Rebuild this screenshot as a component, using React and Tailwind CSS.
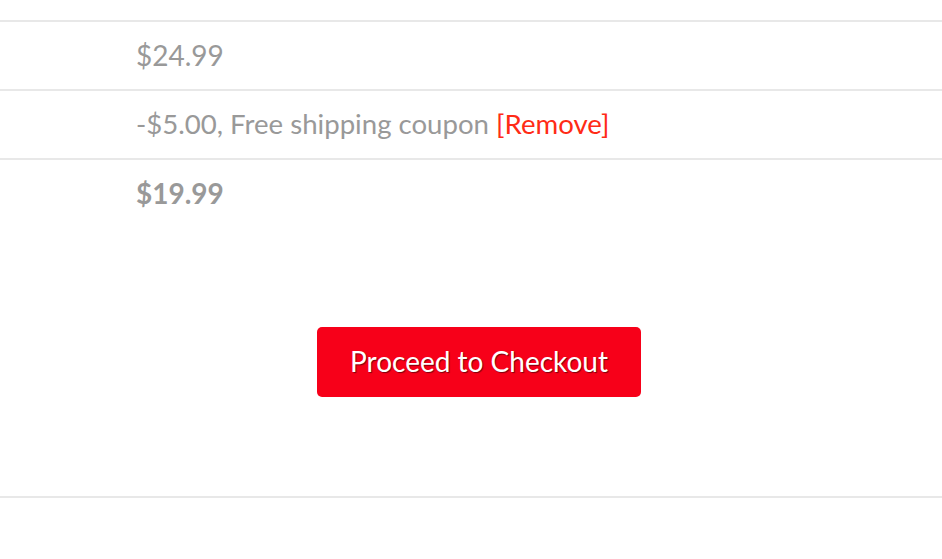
import React from 'react';

export default function App() {
  return (
    <div className="w-[942px] h-[559px] bg-white overflow-hidden" style={{ fontFamily: 'Lato, "Open Sans", sans-serif' }}>
      <div className="pt-5">
        <div className="border-t-2 border-[#e8e8e8] h-[69px] flex items-center pl-[136px] pb-0.5 text-[28px] text-[#999]">
          $24.99
        </div>
        <div className="border-t-2 border-[#e8e8e8] h-[69px] flex items-center pl-[136px] pb-0.5 text-[27.6px] text-[#999]">
          -$5.00, Free shipping coupon&nbsp;<a href="#" className="text-[#ff2b16]">[Remove]</a>
        </div>
        <div className="border-t-2 border-[#e8e8e8] h-[69px] flex items-center pl-[136px] pb-0.5 text-[28px] text-[#999] font-bold">
          $19.99
        </div>
        <div className="h-[269px] flex items-center justify-center pl-4">
          <button className="w-[324px] h-[70px] rounded-[5px] bg-[#f70019] text-white text-[28px] pb-0.5 [text-shadow:1px_1px_1px_rgba(0,0,0,0.5)]">
            Proceed to Checkout
          </button>
        </div>
        <div className="border-t-2 border-[#e8e8e8]" />
      </div>
    </div>
  );
}
